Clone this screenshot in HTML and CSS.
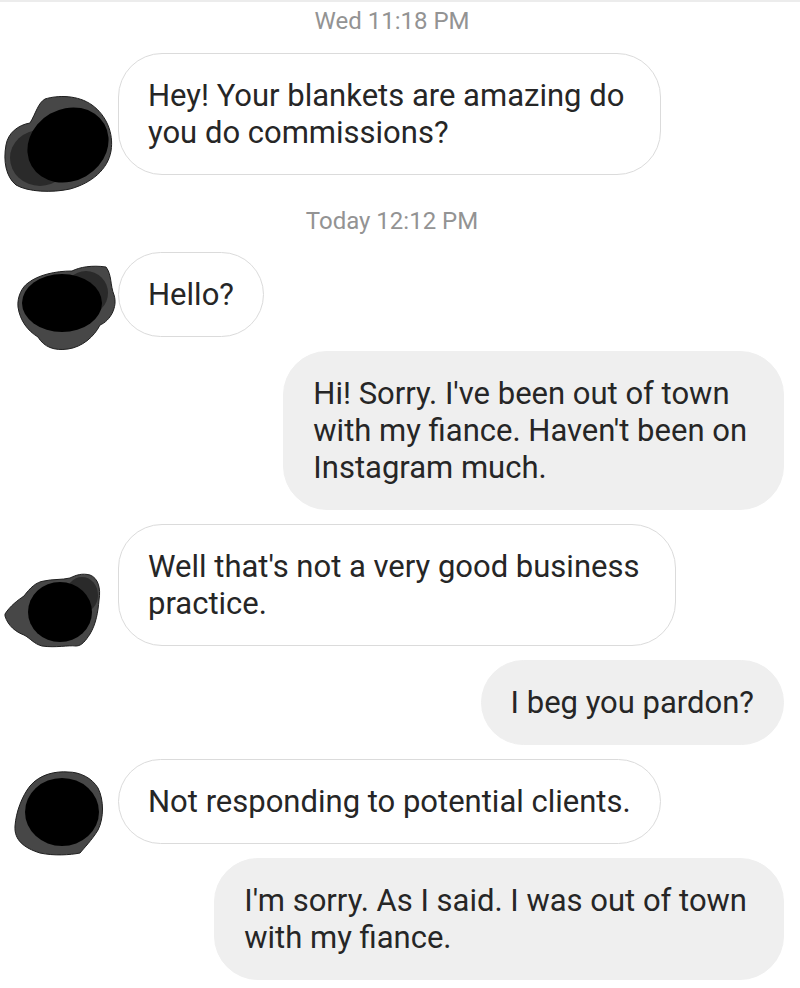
FILE: index.html
```html
<!DOCTYPE html>
<html>
<head>
<meta charset="utf-8">
<link rel="stylesheet" href="styles.css">
</head>
<body>
<div class="chat">
  <div class="time first">Wed 11:18 PM</div>

  <div class="row in">
    <div class="avatar a1">
      <svg width="118" height="100" viewBox="0 0 118 100">
        <path class="edge" d="M45,6 C58,2 78,2 92,12 C106,22 114,40 111,58 C108,76 92,90 70,96 C52,100 28,99 16,92 C6,84 3,68 6,52 C8,40 18,32 30,30 C36,20 38,10 45,6 Z"/>
        <ellipse class="mid" cx="40" cy="65" rx="30" ry="28"/>
        <ellipse class="core" cx="68" cy="52" rx="42" ry="36" transform="rotate(-30 68 52)"/>
      </svg>
    </div>
    <div class="bubble multi">Hey! Your blankets are amazing do<br>you do commissions?</div>
  </div>

  <div class="time">Today 12:12 PM</div>

  <div class="row in">
    <div class="avatar a2">
      <svg width="118" height="100" viewBox="0 0 118 100">
        <path class="edge" d="M28,30 C38,22 55,18 72,18 C80,14 92,12 106,14 C112,22 110,32 114,42 C118,54 110,68 100,72 C94,84 82,94 68,96 C54,98 44,94 38,84 C28,78 20,68 18,54 C17,44 22,34 28,30 Z"/>
        <ellipse class="mid" cx="86" cy="40" rx="22" ry="22"/>
        <ellipse class="core" cx="62" cy="50" rx="40" ry="29"/>
      </svg>
    </div>
    <div class="bubble">Hello?</div>
  </div>

  <div class="row out">
    <div class="bubble multi">Hi! Sorry. I've been out of town<br>with my fiance. Haven't been on<br>Instagram much.</div>
  </div>

  <div class="row in">
    <div class="avatar a3">
      <svg width="118" height="100" viewBox="0 0 118 100">
        <path class="edge" d="M5,64 C10,56 18,50 24,46 C30,38 36,32 44,31 C52,29 62,30 70,28 C76,25 82,23 90,25 C98,28 101,38 99,50 C98,62 96,74 90,84 C86,90 82,96 76,96 C68,95 56,98 42,96 C34,94 30,88 24,85 C16,82 8,76 5,66 Z"/>
        <ellipse class="mid" cx="82" cy="45" rx="16" ry="18"/>
        <ellipse class="core" cx="60" cy="62" rx="32" ry="30"/>
      </svg>
    </div>
    <div class="bubble multi">Well that's not a very good business<br>practice.</div>
  </div>

  <div class="row out">
    <div class="bubble">I beg you pardon?</div>
  </div>

  <div class="row in">
    <div class="avatar a4">
      <svg width="118" height="100" viewBox="0 0 118 100">
        <path class="edge" d="M68,16 C56,15 40,18 30,30 C22,40 16,56 15,70 C14,84 24,92 40,97 C54,100 70,99 80,97 C84,92 92,84 98,74 C104,62 104,44 98,32 C92,22 80,16 68,16 Z"/>
        <ellipse class="core" cx="62" cy="56" rx="37" ry="34"/>
      </svg>
    </div>
    <div class="bubble">Not responding to potential clients.</div>
  </div>

  <div class="row out">
    <div class="bubble multi">I'm sorry. As I said. I was out of town<br>with my fiance.</div>
  </div>
</div>
</body>
</html>
```

FILE: styles.css
```css
html, body {
  margin: 0;
  padding: 0;
  background: #ffffff;
}

body {
  border-top: 2px solid #ececec;
  font-family: Roboto, "Noto Sans", "Liberation Sans", sans-serif;
  color: #262626;
}

.chat {
  display: flex;
  flex-direction: column;
  gap: 14px;
  padding: 0 16px 0 0;
}

.time {
  text-align: center;
  font-size: 24px;
  line-height: 28px;
  color: #939393;
  margin: 18px 0 3px 0;
}

.time.first {
  margin: 5px 0 4px 0;
}

.row {
  display: flex;
  align-items: flex-end;
}

.row.out {
  justify-content: flex-end;
}

.avatar {
  width: 118px;
  flex: 0 0 118px;
  height: 60px;
  display: flex;
  align-items: flex-end;
}

.avatar svg {
  display: block;
  flex: 0 0 auto;
}

.a1 svg { margin-bottom: -18px; }
.a2 svg { margin-bottom: -16px; }
.a3 svg { margin-bottom: -4px; }
.a4 svg { margin-bottom: -12px; }

.edge {
  fill: #474747;
  stroke: #1e1e1e;
  stroke-width: 1;
  stroke-linejoin: round;
}

.mid {
  fill: #2a2a2a;
}

.core {
  fill: #000000;
}

.bubble {
  font-size: 31px;
  line-height: 37px;
  padding: 23px 29px;
  border: 1.5px solid #dbdbdb;
  border-radius: 44px;
  background: #ffffff;
  white-space: nowrap;
}

.bubble.multi {
  padding-right: 36px;
}

.out .bubble {
  background: #efefef;
  border-color: #efefef;
}
```
